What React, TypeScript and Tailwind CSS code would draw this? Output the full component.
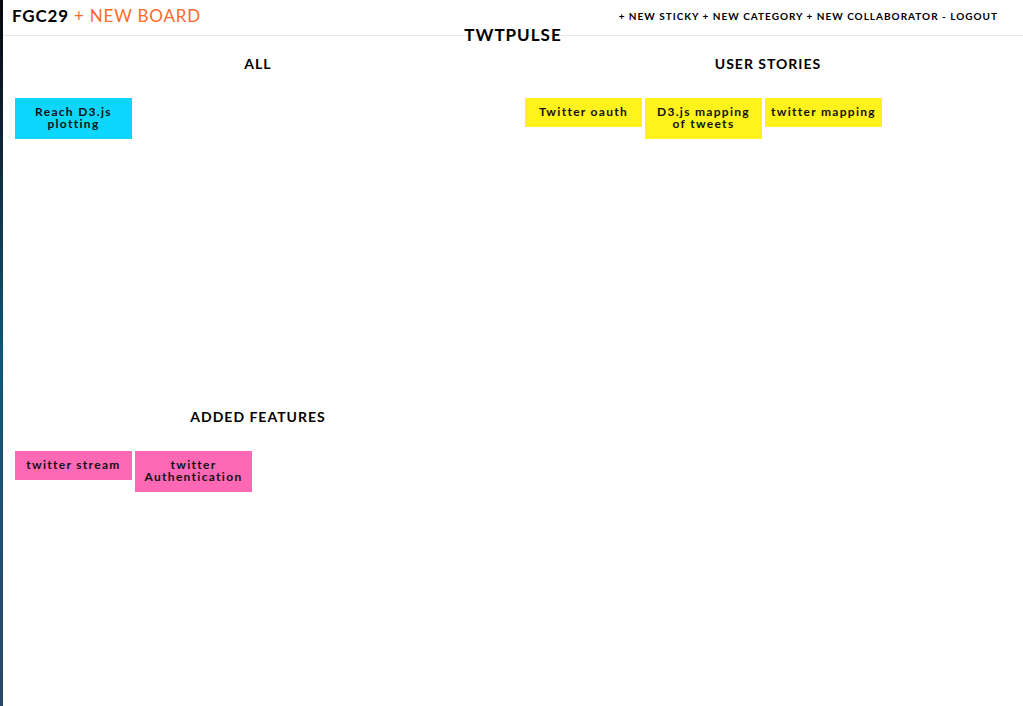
import React from "react";

type Sticky = { text: string; color: string };

const COLORS: Record<string, string> = {
  cyan: "bg-[#0dd6fc]",
  yellow: "bg-[#fff31b]",
  pink: "bg-[#ff68b4]",
};

function StickyNote({ s }: { s: Sticky }) {
  return (
    <div
      className={`w-[117px] pt-[8px] pb-[9px] px-[5px] text-center text-[12px] leading-[12px] font-bold tracking-[1.3px] text-[#111] ${COLORS[s.color]}`}
    >
      {s.text}
    </div>
  );
}

function Category({
  title,
  stickies,
  tall,
}: {
  title: string;
  stickies: Sticky[];
  tall?: boolean;
}) {
  return (
    <div className={`${tall ? "h-[353px]" : ""} pt-[10px] px-[12px]`}>
      <h2 className="text-center text-[14px] leading-[18px] font-bold tracking-[1px] text-black">
        {title}
      </h2>
      <div className="mt-[25px] flex flex-wrap items-start gap-[3px]">
        {stickies.map((s, i) => (
          <StickyNote key={i} s={s} />
        ))}
      </div>
    </div>
  );
}

export default function App() {
  return (
    <div
      className="flex h-[706px] w-full overflow-hidden bg-white"
      style={{ fontFamily: 'Lato, "Noto Sans", sans-serif' }}
    >
      <div className="w-[3px] shrink-0 bg-gradient-to-b from-[#07070f] via-[#0d5777] to-[#2b4668]" />
      <div className="flex-1 flex flex-col">
        <header className="h-[36px] shrink-0 border-b border-[#e8e8e8] flex items-center justify-between pl-[9px] pr-[25px]">
          <div className="text-[17px] leading-[20px] tracking-[0.8px] -mt-[3px]">
            <span className="font-bold text-black">FGC29</span>
            <span className="text-[#ff6a2b]"> + NEW BOARD</span>
          </div>
          <nav className="text-[10px] font-bold tracking-[1px] text-black -mt-[2px]">
            + NEW STICKY + NEW CATEGORY + NEW COLLABORATOR - LOGOUT
          </nav>
        </header>
        <h1 className="-mt-[11px] text-center text-[17px] leading-[20px] font-bold tracking-[1px] text-black">
          TWTPULSE
        </h1>
        <div className="grid grid-cols-2">
          <Category tall title="ALL" stickies={[{ text: "Reach D3.js plotting", color: "cyan" }]} />
          <Category
            tall
            title="USER STORIES"
            stickies={[
              { text: "Twitter oauth", color: "yellow" },
              { text: "D3.js mapping of tweets", color: "yellow" },
              { text: "twitter mapping", color: "yellow" },
            ]}
          />
          <Category
            title="ADDED FEATURES"
            stickies={[
              { text: "twitter stream", color: "pink" },
              { text: "twitter Authentication", color: "pink" },
            ]}
          />
        </div>
      </div>
    </div>
  );
}
